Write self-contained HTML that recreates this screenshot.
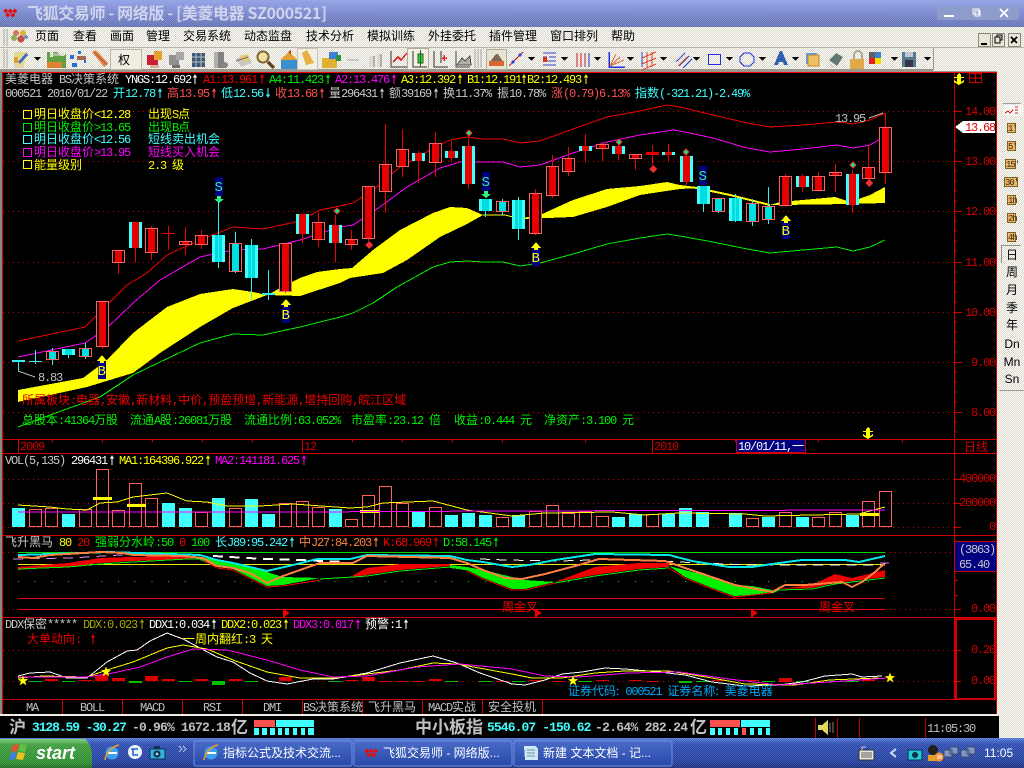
<!DOCTYPE html>
<html><head><meta charset="utf-8"><title>飞狐交易师</title>
<style>
html,body{margin:0;padding:0;background:#000;overflow:hidden;width:1024px;height:768px}
svg{display:block}
text{font-family:"Liberation Mono","WenQuanYi Zen Hei","Noto Sans CJK SC",monospace;font-size:12px;letter-spacing:-1.2px;white-space:pre}
.c{font-family:"WenQuanYi Zen Hei","Noto Sans CJK SC",sans-serif;font-size:12px;letter-spacing:0}
.s{font-family:"Liberation Sans","WenQuanYi Zen Hei","Noto Sans CJK SC",sans-serif;font-size:12px;letter-spacing:0}
.b{font-family:"Liberation Mono",monospace;font-weight:bold;font-size:13px;letter-spacing:-1px}
.h{font-family:"Noto Sans CJK SC",sans-serif;font-weight:bold;font-size:17px;letter-spacing:0}
</style></head><body>
<svg width="1024" height="768" viewBox="0 0 1024 768" shape-rendering="crispEdges">
<defs>
<pattern id="chk" width="2" height="2" patternUnits="userSpaceOnUse"><rect width="2" height="2" fill="#d9d6c8"/><rect width="1" height="1" fill="#fff"/><rect x="1" y="1" width="1" height="1" fill="#fff"/></pattern>
<pattern id="dit" width="2" height="2" patternUnits="userSpaceOnUse"><rect width="1" height="1" fill="#fff" fill-opacity=".13"/><rect x="1" y="1" width="1" height="1" fill="#fff" fill-opacity=".13"/></pattern>
<linearGradient id="tg" x1="0" y1="0" x2="0" y2="1"><stop offset="0" stop-color="#8f9fe6"/><stop offset=".5" stop-color="#7685cc"/><stop offset="1" stop-color="#6272b4"/></linearGradient>
<linearGradient id="bg" x1="0" y1="0" x2="0" y2="1"><stop offset="0" stop-color="#5478d4"/><stop offset=".2" stop-color="#2c4cb0"/><stop offset=".8" stop-color="#223e9c"/><stop offset="1" stop-color="#182c78"/></linearGradient>
<linearGradient id="sg" x1="0" y1="0" x2="0" y2="1"><stop offset="0" stop-color="#7cc87c"/><stop offset=".2" stop-color="#3c9c3c"/><stop offset=".8" stop-color="#2c8c2c"/><stop offset="1" stop-color="#1c6c1c"/></linearGradient>
<linearGradient id="tb" x1="0" y1="0" x2="0" y2="1"><stop offset="0" stop-color="#4a6cc8"/><stop offset="1" stop-color="#2848a8"/></linearGradient>
<path id="u" d="M3 0L5 3.500H3.500V10H2.500V3.500H1Z"/>
<path id="d" d="M2.500 0H3.500V6.500H5L3 10L1 6.500H2.500Z"/>
<path id="ya" d="M0 6L5 0L10 6H7V8H3V6Z"/>
<path id="anc" d="M6 0L8 2V4H11V5H8V9L11 7V9L6 12L1 9V7L4 9V5H1V4H4V2Z"/>
<path id="st" d="M0-10L2.600-3.300H9.500L3.900 1L6 8L0 3.800L-6 8L-3.900 1L-9.500-3.300H-2.600Z"/>
<path id="lg" d="M3 3l2.500-2.500L8 3 5.500 5.500zM7.500 3l2.500-2.500L12.500 3 10 5.500zM12 3l2.500-2.500L17 3 14.500 5.500zM5.200 7l2.500-2.500L10.200 7 7.700 9.500zM10 7l2.500-2.500L15 7 12.500 9.500z"/>
</defs>

<!-- base -->
<rect width="1024" height="768" fill="#000"/>
<rect x="0" y="27" width="1024" height="44" fill="url(#chk)"/>
<rect x="997" y="71" width="27" height="667" fill="url(#chk)"/>

<!-- title bar -->
<rect width="1024" height="27" fill="url(#tg)"/><rect width="1024" height="27" fill="url(#dit)"/>
<use href="#lg" x="0" y="8" fill="#e01010"/>
<text x="27" y="19" class="h" fill="#d0d4ec" style="font-size:16px" textLength="300">飞狐交易师 - 网络版 - [美菱电器 SZ000521]</text>
<rect x="937" y="6" width="28" height="14" rx="2" fill="#8e9ccc"/><rect x="965" y="6" width="26" height="14" fill="#8e9ccc"/><rect x="991" y="6" width="28" height="14" rx="2" fill="#8e9ccc"/>
<path d="M944 15h10v2h-10z" fill="#fff"/><path d="M973 9h6v5h-6zM975 11v5h5v-5z" fill="none" stroke="#fff"/><path d="M1000 9l8 8M1008 9l-8 8" stroke="#fff" stroke-width="2" fill="none"/>

<!-- menu bar -->
<path d="M4 29v17M7 29v17" stroke="#a8a598"/>
<circle cx="16" cy="33" r="3" fill="#d8785a"/><circle cx="23" cy="33" r="3" fill="#e0b040"/><circle cx="14" cy="38" r="3" fill="#8ab060"/><circle cx="21" cy="39" r="3.500" fill="#c05048"/><circle cx="26" cy="37" r="2" fill="#7090c0"/>
<g fill="#000">
<text x="35" y="40"><tspan class="c">页面</tspan></text><text x="73" y="40"><tspan class="c">查看</tspan></text><text x="110" y="40"><tspan class="c">画面</tspan></text><text x="146" y="40"><tspan class="c">管理</tspan></text><text x="183" y="40"><tspan class="c">交易系统</tspan></text><text x="244" y="40"><tspan class="c">动态监盘</tspan></text><text x="306" y="40"><tspan class="c">技术分析</tspan></text><text x="367" y="40"><tspan class="c">模拟训练</tspan></text><text x="428" y="40"><tspan class="c">外挂委托</tspan></text><text x="489" y="40"><tspan class="c">插件管理</tspan></text><text x="550" y="40"><tspan class="c">窗口排列</tspan></text><text x="611" y="40"><tspan class="c">帮助</tspan></text>
</g>
<g fill="#e8e5d8" stroke="#8a887c"><rect x="978.500" y="33.500" width="12" height="13"/><rect x="992.500" y="33.500" width="12" height="13"/><rect x="1008.500" y="33.500" width="12" height="13"/></g>
<path d="M981 43h6v2h-6z" fill="#000"/><path d="M995 37h5v6h-5zM997 37v-2h5v5h-2" fill="none" stroke="#000"/><path d="M1011 37l6 6M1017 37l-6 6" stroke="#000" stroke-width="1.500" fill="none"/>

<!-- toolbar -->
<rect x="0" y="47" width="1024" height="1" fill="#b8b5a8"/>
<rect x="0" y="69" width="933" height="2" fill="#9a988c"/><rect x="933" y="48" width="1" height="22" fill="#9a988c"/>
<path d="M4 49v19M7 49v19" stroke="#a8a598"/>
<path d="M14 52h10v16h-10z" fill="#d8d4b8"/><path d="M14 52l3 15h7l3-15z" fill="#e6d890"/><path d="M18 62l8-9 2 2-8 9z" fill="#4068c0"/><path d="M14 57h4v6h-4z" fill="#e0a030"/>
<path d="M34 57h7l-3.500 4z M128 57h7l-3.500 4z" fill="#000"/>
<path d="M47 68V52h3v5h3v-5h4l4 4h3l2-3v15z" fill="#60a040"/><path d="M47 62h15v6h-15z" fill="#e08030"/><path d="M50 53h14v3h-14z" fill="#d8d8d8" fill-opacity=".6"/>
<path d="M70 55h4v4h-4zM78 51h3v3h-3zM72 63h5v4h-5zM84 60h2v3h-2z" fill="#2070d8"/><path d="M77 56h9v4h-9z" fill="#a06850"/>
<path d="M92 52l4-2 12 13-4 4z" fill="#e08848"/><path d="M94 52l13 13" stroke="#b85830"/>
<rect x="110.500" y="49.500" width="31" height="20" fill="#f0eee2" stroke="#b8b5a8"/><text x="118" y="64"><tspan class="c" fill="#000">权</tspan></text>
<path d="M147 55h11v10h-11z" fill="#c82030"/><path d="M154 51h8v9h-8z" fill="#e8a030"/><path d="M150 65h9v3h-9z" fill="#d8b0a0"/>
<path d="M169 55h10v10h-10z" fill="#909090"/><path d="M176 52h8v8h-8z" fill="#a8a8a8"/><path d="M172 65h8v3h-8z" fill="#707070"/>
<path d="M192 53h13v14h-13z" fill="#405878"/><path d="M192 57h13M192 62h13M196 53v14M201 53v14" stroke="#b8c0c0"/>
<path d="M214 52h10v16h-10z" fill="#b0b0a8"/><path d="M218 52h6v16h-6z" fill="#808080"/><circle cx="225" cy="65" r="3" fill="#888"/>
<path d="M236 59l12-5 4 9-11 4z" fill="#c8c8c8"/><path d="M240 56l8-2 2 6-8 2z" fill="#e8c870"/><path d="M236 61l12-4" stroke="#707070"/>
<circle cx="263" cy="57" r="5.500" fill="#f0e0a8" stroke="#806830" stroke-width="2"/><path d="M268 62l6 6" stroke="#604020" stroke-width="3"/>
<path d="M280 60l9-8 9 8z" fill="#e0a030"/><path d="M281 60h16v9h-16z" fill="#3890d0"/><path d="M288 52l3-2v5z" fill="#c04020"/>
<rect x="297.500" y="48.500" width="20" height="21" fill="#f2f0e4" stroke="#c8c5b8"/><path d="M302 53l5-3 7 13-8 2z" fill="#e8b040"/>
<path d="M322 58h15v10h-15z" fill="#e0b030"/><path d="M329 52h9v7h-9z" fill="#4080d0"/><path d="M336 55h5v6h-5z" fill="#309040"/>
<path d="M345 56h15v3h-15zM345 63h15v3h-15z" fill="#e8e8e8"/><path d="M347 60h12" stroke="#a0a0a0"/>
<path d="M369 56h6v11h-6zM377 54h5v13h-5z" fill="#dcdcd4"/><path d="M373 56h2v11h-2zM380 54h2v13h-2z" fill="#b0b0a8"/>
<path d="M391 51v16h17" fill="none" stroke="#303030"/><path d="M393 62l5-5 3 3 6-7" fill="none" stroke="#e02020" stroke-width="1.500"/>
<rect x="407.500" y="48.500" width="21" height="21" fill="#f2f0e4" stroke="#b0ad9e"/><path d="M413 51v16h14" fill="none" stroke="#303030"/><rect x="418" y="54" width="5" height="9" fill="#40d040" stroke="#206020"/><path d="M420.500 50v17" stroke="#206020"/>
<path d="M434 51v16h14M441 51v12" fill="none" stroke="#303030"/><path d="M442 58h5M444 55v6" stroke="#e02020" stroke-width="1.500"/>
<path d="M456 51v16h14" fill="none" stroke="#404040"/><path d="M457 65l5-7 3 3 5-5 1 9z" fill="#b0b0a8" stroke="#505050"/>
<path d="M475 49v19M478 49v19M481 49v19" stroke="#a8a598"/>
<rect x="486.500" y="49.500" width="20" height="20" fill="#e8e4d0" stroke="#b0ad9e"/><path d="M489 63l7-9h2l6 9z" fill="#806858"/><path d="M489 61h15v5h-15z" fill="#d86830"/>
<path d="M509 66l14-14" stroke="#e02020"/><circle cx="513" cy="62" r="1.500" fill="#2040e0"/><circle cx="520" cy="55" r="1.500" fill="#2040e0"/>
<path d="M528 57h7l-3.500 4zM561 57h7l-3.500 4zM594 57h7l-3.500 4zM627 57h7l-3.500 4zM660 57h7l-3.500 4zM693 57h7l-3.500 4zM726 57h7l-3.500 4zM759 57h7l-3.500 4zM792 57h7l-3.500 4zM891 57h7l-3.500 4zM924 57h7l-3.500 4z" fill="#000"/>
<path d="M543 53h13M543 57h4M549 57h7M543 61h13M543 65h13" stroke="#3040d0"/><path d="M543 57h4v5h-4z" fill="#e03020"/>
<path d="M577 53v14M581 53v14M585 53v14" stroke="#c02020"/><path d="M589 53v14" stroke="#2030d0"/>
<path d="M609 52v15h16" fill="none" stroke="#2030e0" stroke-width="1.500"/><path d="M610 66l6-12M610 66l10-9M610 66l14-6" stroke="#e06030"/>
<path d="M642 58l14-6M642 64l14-6M642 70l14-6M647 52v15M652 52v15" stroke="#e04020" fill="none"/><path d="M642 52v15" stroke="#3040d0"/>
<path d="M676 62l9-9M679 66l10-10M683 68l9-9" stroke="#3040d0" fill="none"/><path d="M678 66l9-9" stroke="#e06030"/>
<rect x="708.500" y="54.500" width="12" height="10" fill="none" stroke="#2030e0"/>
<path d="M744 53h6l4 4v5l-4 4h-6l-4-4v-5z" fill="none" stroke="#2030e0"/>
<path d="M774 65l6-14h2l6 14h-4l-1-3h-4l-1 3z" fill="#3060b0"/>
<rect x="806" y="53" width="11" height="11" fill="#60a0e0"/><rect x="808" y="55" width="11" height="11" fill="#f0c060" stroke="#c08030"/>
<path d="M829 60l7-7 7 4-6 9z" fill="#607870"/><path d="M829 63l6 4-3 1z" fill="#c8c8c8"/>
<path d="M853 55a5 5 0 0 1 10 0v4h-2v-4a3 3 0 0 0-6 0v4h-2z" fill="#b0a890"/><rect x="850" y="59" width="14" height="10" fill="#e0a848"/>
<rect x="869" y="52" width="6" height="6" fill="#606060"/><rect x="875" y="52" width="6" height="6" fill="#4080d0"/><rect x="869" y="58" width="6" height="6" fill="#e02020"/><rect x="875" y="58" width="6" height="6" fill="#f0e000"/>
<rect x="902" y="52" width="14" height="15" fill="#587890"/><rect x="905" y="52" width="8" height="5" fill="#c0c8d0"/><rect x="905" y="60" width="8" height="7" fill="#303848"/>

<!-- frame -->
<rect x="0" y="71" width="2" height="643" fill="#888"/>
<g fill="#d00000">
<rect x="2" y="72" width="995" height="1" fill="#f00000"/><rect x="0" y="71" width="997" height="1" fill="#9a988c"/>
<rect x="2" y="72" width="1" height="642"/><rect x="996" y="72" width="1" height="642"/>
<rect x="954" y="72" width="1" height="627"/>
<rect x="2" y="439" width="994" height="1"/><rect x="2" y="453" width="994" height="1"/><rect x="2" y="535" width="994" height="1"/><rect x="2" y="617" width="994" height="1"/><rect x="2" y="699" width="994" height="1"/>
<rect x="955" y="618" width="41" height="2"/><rect x="955" y="618" width="2" height="82"/><rect x="994" y="618" width="2" height="82"/><rect x="955" y="698" width="41" height="2"/>
</g>

<!-- grid -->
<g stroke="#d00000" stroke-dasharray="1 4" fill="none">
<path d="M3 111.500H954M3 161.500H954M3 211.500H954M3 262.500H954M3 312.500H954M3 362.500H954M3 412.500H954M3 479.500H954M3 503.500H954M3 527.500H954M3 552.500H18M885 552.500H954M3 609.500H18M885 609.500H954M3 650.500H954M3 681.500H954"/>
</g>
<path d="M955 121h5M955 131h3M955 141h3M955 151h3M955 171h3M955 181h3M955 191h3M955 201h3M955 221h3M955 231h3M955 241h3M955 251h3M955 272h3M955 282h3M955 292h3M955 302h3M955 322h3M955 332h3M955 342h3M955 352h3M955 372h3M955 382h3M955 392h3M955 402h3M955 422h3M955 432h3" stroke="#d00000" stroke-dasharray="1 1"/>
<path d="M955 111.500h7M955 161.500h7M955 211.500h7M955 262.500h7M955 312.500h7M955 362.500h7M955 412.500h7M955 479.500h6M955 503.500h6M955 527.500h6M955 552.500h4M955 565.500h3M955 580.500h3M955 595.500h3M955 609.500h6M955 650.500h6M955 681.500h6" stroke="#d00000"/>

<!-- envelope lines and band -->
<polygon fill="#ffff00" points="18,390 83,378 107,360 133,333 167,307 200,294 233,289 253,292 267,295 300,278 317,272 340,269 352,268 373,250 400,230 433,213 450,207 467,208 483,215 467,224 440,237 407,260 383,273 350,278 340,283 300,296 267,295 233,308 200,327 160,353 133,373 87,387 18,402"/>
<polyline fill="none" stroke="#ffff00" points="483,215 505,215 513,217 522,219"/>
<polygon fill="#ffff00" points="522,218 540,215 573,200 607,189 640,186 667,182 680,185 697,188 680,189 673,190 640,195 607,207 573,217 522,219"/>
<polyline fill="none" stroke="#ffff00" stroke-width="2" points="680,186 697,188 730,195 770,205"/>
<polygon fill="#ffff00" points="770,205 780,202 813,199 835,197 850,202 870,195 885,187 885,203 850,204 780,205"/>
<polyline fill="none" stroke="#f00000" points="18,341 85,327 100,312 127,285 147,273 167,255 200,240 233,227 263,229 300,221 320,210 340,206 353,203 373,190 400,167 430,150 450,140 467,137 483,139 503,139 520,143 540,141 573,129 607,117 640,111 667,105 680,107 713,115 747,123 770,127 803,125 837,122 853,124 870,120 885,113"/>
<polyline fill="none" stroke="#ff00ff" points="18,357 85,343 107,328 133,303 160,280 200,257 233,250 263,249 300,240 340,227 353,225 373,212 407,187 440,168 460,162 503,162 520,167 540,165 573,153 607,142 640,135 673,130 680,131 713,138 747,148 770,152 803,149 837,145 853,148 870,145 882,138"/>
<polyline fill="none" stroke="#00f000" points="18,427 50,415 100,397 133,375 160,362 200,343 233,334 263,335 300,327 340,317 353,313 373,303 397,287 433,267 450,262 467,261 483,262 503,262 520,266 540,263 573,254 607,244 640,238 667,234 680,236 713,242 747,249 770,253 803,250 837,247 853,251 870,247 885,240"/>

<!-- candles: cyan fills -->
<path fill="#40ffff" d="M62 349h13v6h-13zM129 222h13v26h-13zM212 235h13v27h-13zM245 245h13v33h-13zM296 214h13v20h-13zM329 225h13v18h-13zM412 153h13v8h-13zM445 151h13v7h-13zM462 146h13v38h-13zM479 199h13v12h-13zM512 200h13v29h-13zM579 146h13v5h-13zM612 146h13v8h-13zM662 152h13v3h-13zM680 156h13v26h-13zM697 186h13v18h-13zM729 198h13v23h-13zM796 176h13v11h-13zM846 174h13v31h-13z"/>
<path fill="#00dcdc" d="M215 235h7v27h-7zM248 245h7v33h-7zM482 199h7v12h-7zM515 200h7v29h-7zM700 186h7v18h-7zM732 198h7v23h-7zM65 349h7v6h-7z"/>
<!-- wicks -->
<path fill="none" stroke="#f00000" d="M102.500 346v3M118.500 262v12M135.500 248v14M151.500 226v34M168.500 226v24M185.500 227v28M201.500 230v19M285.500 291v2M302.500 234v9M318.500 213v34M335.500 215v47M351.500 230v20M368.500 238v3M385.500 124v89M402.500 129v48M418.500 151v32M435.500 132v45M451.500 141v21M468.500 138v51M535.500 189v46M552.500 155v43M568.500 147v29M585.500 134v28M602.500 142v19M618.500 144v16M635.500 154v16M652.500 145v20M668.500 144v18M686.500 150v35M785.500 174v33M802.500 174v18M818.500 172v19M835.500 164v28M852.500 170v43M868.500 146v34M885.500 113v71"/>
<path fill="none" stroke="#30f0f0" d="M18.500 361v10M35.500 350v14M52.500 348v17M68.500 355v3M85.500 343v16M218.500 200v68M235.500 232v41M251.500 239v61M268.500 270v30M485.500 211v6M502.500 199v16M518.500 197v43M703.500 204v8M718.500 211v2M735.500 194v28M752.500 199v27M768.500 187v37"/>
<path fill="#30f0f0" d="M12 360h13v2h-13zM29 361h13v1h-13zM262 293h13v2h-13z"/>
<path fill="#f00000" d="M162 233h13v1h-13zM652 152h1v1h-1z"/>
<!-- red bodies -->
<path fill="#000" d="M46 351h12v8h-12zM79 348h12v8h-12zM96 301h12v45h-12zM112 250h12v12h-12zM145 228h12v24h-12zM179 241h12v3h-12zM195 235h12v9h-12zM229 243h12v28h-12zM279 243h12v48h-12zM312 222h12v17h-12zM345 239h12v5h-12zM362 186h12v52h-12zM379 164h12v27h-12zM396 149h12v17h-12zM429 143h12v19h-12zM496 201h12v10h-12zM529 193h12v40h-12zM546 166h12v29h-12zM562 158h12v13h-12zM596 144h12v4h-12zM629 154h12v4h-12zM712 198h12v13h-12zM746 203h12v18h-12zM762 206h12v13h-12zM779 176h12v29h-12zM812 176h12v14h-12zM829 172h12v3h-12zM862 167h12v11h-12zM879 127h12v45h-12z"/>
<path fill="#e60000" d="M99 301h7v45h-7zM115 250h7v12h-7zM148 228h7v24h-7zM182 241h7v3h-7zM198 235h7v9h-7zM282 243h7v48h-7zM315 222h7v17h-7zM348 239h7v5h-7zM365 186h7v52h-7zM382 164h7v27h-7zM399 149h7v17h-7zM432 143h7v19h-7zM532 193h7v40h-7zM549 166h7v29h-7zM565 158h7v13h-7zM599 144h7v4h-7zM632 154h7v4h-7zM782 176h7v29h-7zM815 176h7v14h-7zM832 172h7v3h-7zM865 167h7v11h-7zM882 127h7v45h-7zM132 222h7v26h-7zM299 214h7v20h-7zM332 225h7v18h-7zM415 153h7v8h-7zM448 151h7v7h-7zM465 146h7v38h-7zM582 146h7v5h-7zM615 146h7v8h-7zM665 152h7v3h-7zM683 156h7v26h-7zM799 176h7v11h-7zM849 174h7v31h-7zM646 152h13v3h-13z"/>
<path fill="#00e0e0" d="M49 351h7v8h-7zM82 348h7v8h-7zM232 243h7v28h-7zM499 201h7v10h-7zM715 198h7v13h-7zM749 203h7v18h-7zM765 206h7v13h-7z"/>
<path fill="none" stroke="#ff6060" d="M46.500 351.500h12v8h-12zM79.500 348.500h12v8h-12zM96.500 301.500h12v45h-12zM112.500 250.500h12v12h-12zM145.500 228.500h12v24h-12zM179.500 241.500h12v3h-12zM195.500 235.500h12v9h-12zM229.500 243.500h12v28h-12zM279.500 243.500h12v48h-12zM312.500 222.500h12v17h-12zM345.500 239.500h12v5h-12zM362.500 186.500h12v52h-12zM379.500 164.500h12v27h-12zM396.500 149.500h12v17h-12zM429.500 143.500h12v19h-12zM496.500 201.500h12v10h-12zM529.500 193.500h12v40h-12zM546.500 166.500h12v29h-12zM562.500 158.500h12v13h-12zM596.500 144.500h12v4h-12zM629.500 154.500h12v4h-12zM712.500 198.500h12v13h-12zM746.500 203.500h12v18h-12zM762.500 206.500h12v13h-12zM779.500 176.500h12v29h-12zM812.500 176.500h12v14h-12zM829.500 172.500h12v3h-12zM862.500 167.500h12v11h-12zM879.500 127.500h12v45h-12z"/>
<!-- diamonds -->
<path fill="#f03030" d="M369 241l4 4-4 4-4-4zM653 165l4 4-4 4-4-4zM869 179l4 4-4 4-4-4z"/>
<path fill="#00f080" stroke="#e03030" d="M469 130l3 3-3 3-3-3zM619 139l3 3-3 3-3-3zM686 149l3 3-3 3-3-3zM853 162l3 3-3 3-3-3zM337 208l3 3-3 3-3-3z"/>
<!-- S/B markers -->
<g fill="#000080"><rect x="215" y="177" width="8" height="19"/><rect x="482" y="172" width="8" height="19"/><rect x="699" y="166" width="8" height="19"/><rect x="98" y="361" width="8" height="18"/><rect x="282" y="305" width="8" height="18"/><rect x="532" y="248" width="8" height="18"/><rect x="782" y="221" width="8" height="18"/></g>
<path fill="#30f080" d="M217 196h4v3h3l-5 4-5-4h3zM484 191h4v3h3l-5 4-5-4h3z"/>
<g fill="#ffff00"><use href="#ya" x="97" y="355"/><use href="#ya" x="281" y="299"/><use href="#ya" x="531" y="242"/><use href="#ya" x="781" y="215"/></g>
<text x="214.500" y="191" fill="#30f080" style="font-size:14px;letter-spacing:0">S</text><text x="481.500" y="186" fill="#30f080" style="font-size:14px;letter-spacing:0">S</text><text x="698.500" y="180" fill="#30f080" style="font-size:14px;letter-spacing:0">S</text><text x="97.500" y="375" fill="#ffff00" style="font-size:14px;letter-spacing:0">B</text><text x="281.500" y="319" fill="#ffff00" style="font-size:14px;letter-spacing:0">B</text><text x="531.500" y="262" fill="#ffff00" style="font-size:14px;letter-spacing:0">B</text><text x="781.500" y="235" fill="#ffff00" style="font-size:14px;letter-spacing:0">B</text>
<path d="M18 371L35 377" stroke="#c0c0c0" fill="none"/><text x="38" y="381" fill="#c0c0c0">8.83</text>
<path d="M869 118L883 113" stroke="#c0c0c0" fill="none"/><text x="835" y="122" fill="#c0c0c0">13.95</text>

<!-- header rows -->
<text x="5" y="83" fill="#c8c8c8"><tspan class="c">美菱电器</tspan></text>
<text x="59" y="83" fill="#c8c8c8">BS<tspan class="c">决策系统</tspan></text>
<text x="125" y="83" fill="#fff">YNGS:12.692</text><use href="#u" x="192" y="74" fill="#fff"/>
<text x="203" y="83" fill="#f00000">A1:13.961</text><use href="#u" x="259" y="74" fill="#f00000"/>
<text x="269" y="83" fill="#00f000">A4:11.423</text><use href="#u" x="325" y="74" fill="#00f000"/>
<text x="335" y="83" fill="#ff00ff">A2:13.476</text><use href="#u" x="391" y="74" fill="#ff00ff"/>
<text x="401" y="83" fill="#ffff00">A3:12.392</text><use href="#u" x="457" y="74" fill="#ffff00"/>
<text x="467" y="83" fill="#ffff00">B1:12.191</text><use href="#u" x="521" y="74" fill="#ffff00"/>
<text x="527" y="83" fill="#ffff00">B2:12.493</text><use href="#u" x="583" y="74" fill="#ffff00"/>

<text x="5" y="97" fill="#c8c8c8">000521 2010/01/22</text>
<text x="113" y="97" fill="#40ffff"><tspan class="c">开</tspan>12.78</text><use href="#u" x="157" y="88" fill="#40ffff"/>
<text x="167" y="97" fill="#ff5050"><tspan class="c">高</tspan>13.95</text><use href="#u" x="211" y="88" fill="#ff5050"/>
<text x="221" y="97" fill="#40ffff"><tspan class="c">低</tspan>12.56</text><use href="#d" x="265" y="88" fill="#40ffff"/>
<text x="275" y="97" fill="#ff5050"><tspan class="c">收</tspan>13.68</text><use href="#u" x="319" y="88" fill="#ff5050"/>
<text x="329" y="97" fill="#c8c8c8"><tspan class="c">量</tspan>296431</text><use href="#u" x="379" y="88" fill="#c8c8c8"/>
<text x="389" y="97" fill="#c8c8c8"><tspan class="c">额</tspan>39169</text><use href="#u" x="433" y="88" fill="#c8c8c8"/>
<text x="443" y="97" fill="#c8c8c8"><tspan class="c">换</tspan>11.37%</text>
<text x="497" y="97" fill="#c8c8c8"><tspan class="c">振</tspan>10.78%</text>
<text x="551" y="97" fill="#ff5050"><tspan class="c">涨</tspan>(0.79)6.13%</text>
<text x="635" y="97" fill="#40ffff"><tspan class="c">指数</tspan>(-321.21)-2.49%</text>

<!-- legend -->
<g fill="none" stroke-width="1">
<rect x="23.500" y="110.500" width="8" height="8" stroke="#ffff00"/><rect x="23.500" y="123.500" width="8" height="8" stroke="#00f000"/><rect x="23.500" y="135.500" width="8" height="8" stroke="#40ffff"/><rect x="23.500" y="148.500" width="8" height="8" stroke="#ff00ff"/><rect x="23.500" y="160.500" width="8" height="8" stroke="#ffff00"/>
</g>
<text x="34" y="118" fill="#ffff00"><tspan class="c">明日收盘价</tspan>&lt;12.28</text><text x="148" y="118" fill="#ffff00"><tspan class="c">出现</tspan>S<tspan class="c">点</tspan></text>
<text x="34" y="131" fill="#00f000"><tspan class="c">明日收盘价</tspan>&gt;13.65</text><text x="148" y="131" fill="#00f000"><tspan class="c">出现</tspan>B<tspan class="c">点</tspan></text>
<text x="34" y="143" fill="#40ffff"><tspan class="c">明日收盘价</tspan>&lt;12.56</text><text x="148" y="143" fill="#40ffff"><tspan class="c">短线卖出机会</tspan></text>
<text x="34" y="156" fill="#ff00ff"><tspan class="c">明日收盘价</tspan>&gt;13.95</text><text x="148" y="156" fill="#ff00ff"><tspan class="c">短线买入机会</tspan></text>
<text x="34" y="169" fill="#ffff00"><tspan class="c">能量级别</tspan></text><text x="148" y="169" fill="#ffff00">2.3 <tspan class="c">级</tspan></text>

<text x="22" y="404" fill="#f00000"><tspan class="c">所属板块</tspan>:<tspan class="c">电器</tspan>,<tspan class="c">安徽</tspan>,<tspan class="c">新材料</tspan>,<tspan class="c">中价</tspan>,<tspan class="c">预盈预增</tspan>,<tspan class="c">新能源</tspan>,<tspan class="c">增持回购</tspan>,<tspan class="c">皖江区域</tspan></text>
<text x="22" y="424" fill="#00f000"><tspan class="c">总股本</tspan>:41364<tspan class="c">万股</tspan></text>
<text x="130" y="424" fill="#00f000"><tspan class="c">流通</tspan>A<tspan class="c">股</tspan>:26081<tspan class="c">万股</tspan></text>
<text x="244" y="424" fill="#00f000"><tspan class="c">流通比例</tspan>:63.052%</text>
<text x="351" y="424" fill="#00f000"><tspan class="c">市盈率</tspan>:23.12 <tspan class="c">倍</tspan></text>
<text x="454" y="424" fill="#00f000"><tspan class="c">收益</tspan>:0.444 <tspan class="c">元</tspan></text>
<text x="544" y="424" fill="#00f000"><tspan class="c">净资产</tspan>:3.100 <tspan class="c">元</tspan></text>

<!-- price axis -->
<g fill="#d00000">
<text x="965" y="115">14.00</text><text x="965" y="165">13.00</text><text x="965" y="215">12.00</text><text x="965" y="266">11.00</text><text x="965" y="316">10.00</text><text x="971" y="366">9.00</text><text x="971" y="416">8.00</text>
<text x="959" y="482">400000</text><text x="959" y="506">200000</text><text x="989" y="530">0</text>
<text x="971" y="612">0.00</text><text x="971" y="653">0.20</text><text x="971" y="684">0.00</text>
</g>
<polygon fill="#fff" points="955,127 963,121 995,121 995,133 963,133"/><text x="965" y="131" fill="#e00000">13.68</text>
<use href="#anc" x="953" y="73" fill="#ffff00"/><path d="M969.500 73.500h12v9h-12zM975.500 73v9M969 78h12" fill="none" stroke="#d00000"/>
<use href="#anc" x="862" y="427" fill="#ffff00"/>

<!-- time axis -->
<path d="M18.500 440v13M302.500 440v13M652.500 440v13M52.500 440v2M102.500 440v2M152.500 440v2M202.500 440v2M252.500 440v2M352.500 440v2M402.500 440v2M452.500 440v2M502.500 440v2M585.500 440v2M735.500 440v2M818.500 440v2M902.500 440v2M954.500 440v2" stroke="#d00000"/>
<text x="20" y="450" fill="#d00000">2009</text><text x="304" y="450" fill="#d00000">12</text><text x="654" y="450" fill="#d00000">2010</text>
<rect x="736.500" y="439.500" width="69" height="13" fill="#000080" stroke="#d00000"/><text x="738" y="450" fill="#fff">10/01/11,<tspan class="c">一</tspan></text>
<text x="964" y="451" fill="#d00000"><tspan class="c">日线</tspan></text>

<!-- VOL -->
<text x="5" y="464" fill="#c8c8c8">VOL(5,135)</text><text x="71" y="464" fill="#fff">296431</text><use href="#u" x="109" y="455" fill="#fff"/>
<text x="119" y="464" fill="#ffff00">MA1:164396.922</text><use href="#u" x="205" y="455" fill="#ffff00"/>
<text x="215" y="464" fill="#ff00ff">MA2:141181.625</text><use href="#u" x="301" y="455" fill="#ff00ff"/>
<path fill="#40ffff" d="M12 508h13v19h-13zM62 514h13v13h-13zM162 503h13v24h-13zM179 508h13v19h-13zM212 498h13v29h-13zM245 499h13v28h-13zM262 514h13v13h-13zM329 509h13v18h-13zM412 511h13v16h-13zM445 515h13v12h-13zM462 513h13v14h-13zM479 515h13v12h-13zM512 515h13v12h-13zM612 517h13v10h-13zM629 514h13v13h-13zM662 514h13v13h-13zM679 508h13v19h-13zM696 512h13v15h-13zM729 513h13v14h-13zM762 517h13v10h-13zM796 517h13v10h-13zM846 515h13v12h-13z"/>
<path fill="none" stroke="#ff6060" d="M29.500 509.500h12v17h-12zM45.500 508.500h12v18h-12zM79.500 509.500h12v17h-12zM96.500 469.500h12v57h-12zM112.500 510.500h12v16h-12zM129.500 483.500h12v43h-12zM145.500 498.500h12v28h-12zM195.500 512.500h12v14h-12zM229.500 508.500h12v18h-12zM279.500 503.500h12v23h-12zM296.500 501.500h12v25h-12zM312.500 507.500h12v19h-12zM345.500 519.500h12v7h-12zM362.500 495.500h12v31h-12zM379.500 486.500h12v40h-12zM396.500 503.500h12v23h-12zM429.500 507.500h12v19h-12zM496.500 517.500h12v9h-12zM529.500 511.500h12v15h-12zM546.500 505.500h12v21h-12zM562.500 513.500h12v13h-12zM579.500 511.500h12v15h-12zM596.500 516.500h12v10h-12zM646.500 514.500h12v12h-12zM746.500 518.500h12v8h-12zM779.500 512.500h12v14h-12zM812.500 517.500h12v9h-12zM829.500 512.500h12v14h-12zM862.500 501.500h12v25h-12zM879.500 491.500h12v35h-12z"/>
<path fill="#ffff00" d="M93 497h19v3h-19zM127 504h19v3h-19zM360 510h19v3h-19zM860 513h19v3h-19z"/>
<polyline fill="none" stroke="#ffff00" points="18,505 50,507 67,509 87,510 100,503 117,502 133,497 167,493 187,501 207,502 227,506 260,506 293,504 350,508 367,507 383,503 433,501 467,510 512,516 545,513 612,512 645,515 679,513 745,514 765,516 859,514 877,509 885,507"/>
<polyline fill="none" stroke="#ff00ff" points="18,512 300,512 500,511 885,510"/>

<!-- Feisheng panel -->
<text x="5" y="546" fill="#c8c8c8"><tspan class="c">飞升黑马</tspan></text><text x="59" y="546" fill="#ffff00">80</text><text x="77" y="546" fill="#f00000">20</text>
<text x="95" y="546" fill="#00f000"><tspan class="c">强弱分水岭</tspan>:50</text><text x="179" y="546" fill="#f00000">0</text><text x="191" y="546" fill="#00f000">100</text>
<text x="215" y="546" fill="#40ffff"><tspan class="c">长</tspan>J89:95.242</text><use href="#u" x="289" y="537" fill="#40ffff"/>
<text x="299" y="546" fill="#ff8040"><tspan class="c">中</tspan>J27:84.203</text><use href="#u" x="373" y="537" fill="#ff8040"/>
<text x="383" y="546" fill="#f00000">K:68.969</text><use href="#u" x="433" y="537" fill="#f00000"/>
<text x="443" y="546" fill="#00f000">D:58.145</text><use href="#u" x="493" y="537" fill="#00f000"/>
<path d="M18 552.500H885" stroke="#00d800"/><path d="M18 564.500H885" stroke="#e8e800"/>
<path d="M18 581.500H885" stroke="#00e000" stroke-dasharray="1 15.670"/>
<path d="M18 598.500H885" stroke="#e00000"/><path d="M18 609.500H885" stroke="#f00000"/>
<polyline fill="none" stroke="#e090e0" stroke-dasharray="10 6.670" points="13,559 70,558 120,555 190,555"/>
<polyline fill="none" stroke="#fff" stroke-width="2" stroke-dasharray="10 6.670" points="213,556 230,557 265,559 300,560 345,562"/>
<polyline fill="none" stroke="#fff" stroke-dasharray="10 6.670" points="480,559 505,560 560,561 620,559 700,563 750,565 885,565"/>
<polygon fill="#f00000" points="18,567 43,565 68,563 100,558 133,557 187,556 203,557 187,559 133,561 100,563 68,567 43,568 18,570"/>
<polygon fill="#00f000" points="200,557 217,560 233,562 267,572 283,577 320,578 283,585 267,586 233,569 217,567 200,560"/>
<polygon fill="#f00000" points="353,575 367,568 400,564 450,564 450,566 400,570 367,575 353,577"/>
<polygon fill="#00f000" points="450,565 467,567 483,570 512,577 525,580 555,582 525,589 512,589 483,578 467,570 450,568"/>
<polygon fill="#f00000" points="555,582 595,567 639,563 669,563 669,567 639,569 595,575"/>
<polygon fill="#00f000" points="669,566 685,570 712,577 734,585 752,586 772,590 772,592 752,595 734,596 712,588 685,577"/>
<polygon fill="#f00000" points="779,589 812,585 835,574 852,578 885,570 885,577 852,581 835,583 812,588"/>
<polyline fill="none" stroke="#00f000" points="18,569 68,567 100,564 133,562 187,559 203,559"/>
<polyline fill="none" stroke="#f00000" points="203,560 217,568 233,570 267,587 283,586 320,580"/>
<polyline fill="none" stroke="#00f000" points="320,579 353,577 367,576 400,571 450,567 467,570"/>
<polyline fill="none" stroke="#f00000" points="467,571 483,579 512,590 525,590 555,583"/>
<polyline fill="none" stroke="#00f000" points="555,583 595,576 639,570 669,568"/>
<polyline fill="none" stroke="#f00000" points="669,568 685,578 712,589 734,597 772,593"/>
<polyline fill="none" stroke="#00f000" points="772,593 779,590 812,589 835,584 852,582 885,578"/>
<polyline fill="none" stroke="#00e8e8" stroke-width="2" points="18,555 83,553 107,552 200,555 217,560 233,563 250,567 267,571 293,565 317,559 350,559 367,555 450,556 467,560 483,562 512,567 529,565 555,560 595,554 669,555 692,561 729,567 752,567 779,563 802,560 845,560 859,562 885,556"/>
<polyline fill="none" stroke="#ff8040" stroke-width="2" points="18,557 33,558 50,555 100,552 123,553 133,555 183,556 203,558 217,566 233,568 250,573 267,583 283,576 320,563 353,563 367,556 450,558 467,563 483,570 505,578 522,579 545,574 579,565 599,559 665,561 685,568 700,573 735,585 772,592 785,585 805,585 842,582 852,587 862,582 875,572 885,563"/>
<path d="M880 563h9" stroke="#e070e0"/>
<rect x="955" y="542" width="41" height="29" fill="#000080"/><path d="M955 541.500h41M955 571.500h41" stroke="#d00000"/>
<text x="959" y="553" fill="#c8c8c8">(3863)</text><text x="959" y="568" fill="#c8c8c8">65.40</text>
<path fill="#f00000" d="M283 609h2v8h-2zM285 610l5 3-5 3zM535 609h2v8h-2zM537 610l5 3-5 3zM751 609h2v8h-2zM753 610l5 3-5 3z"/>
<text x="502" y="611" fill="#f00000"><tspan class="c">周金叉</tspan></text><text x="819" y="611" fill="#f00000"><tspan class="c">周金叉</tspan></text>

<!-- DDX panel -->
<text x="5" y="628" fill="#c8c8c8">DDX<tspan class="c">保密</tspan>*****</text>
<text x="83" y="628" fill="#a8a800">DDX:0.023</text><use href="#u" x="139" y="619" fill="#a8a800"/>
<text x="149" y="628" fill="#fff">DDX1:0.034</text><use href="#u" x="211" y="619" fill="#fff"/>
<text x="221" y="628" fill="#ffff00">DDX2:0.023</text><use href="#u" x="283" y="619" fill="#ffff00"/>
<text x="293" y="628" fill="#ff00ff">DDX3:0.017</text><use href="#u" x="355" y="619" fill="#ff00ff"/>
<text x="365" y="628" fill="#fff"><tspan class="c">预警</tspan>:1</text><use href="#u" x="403" y="619" fill="#fff"/>
<text x="27" y="643" fill="#f00000"><tspan class="c">大单动向</tspan>:</text><use href="#u" x="90" y="634" fill="#f00000"/>
<text x="183" y="643" fill="#ffff00"><tspan class="c">一周内翻红</tspan>:3 <tspan class="c">天</tspan></text>
<path fill="#d80000" d="M45 679h13v2h-13zM79 680h13v1h-13zM95 675h13v6h-13zM112 678h13v3h-13zM145 676h13v5h-13zM162 679h13v2h-13zM195 679h13v2h-13zM229 679h13v2h-13zM279 677h13v4h-13zM345 680h13v1h-13zM362 677h13v4h-13zM379 681h13v1h-13zM396 681h13v1h-13zM412 681h13v1h-13zM429 679h13v2h-13zM496 681h12v1h-12zM529 680h13v1h-13zM552 681h13v1h-13zM596 680h13v1h-13zM629 680h13v1h-13zM646 681h12v1h-12zM712 680h13v1h-13zM746 680h13v1h-13zM779 678h13v4h-13zM862 680h13v1h-13z"/>
<path fill="#00c000" d="M29 681h13v1h-13zM62 681h13v1h-13zM129 681h13v2h-13zM179 681h13v1h-13zM212 681h13v4h-13zM245 681h13v1h-13zM329 681h13v1h-13zM445 681h13v1h-13zM479 681h13v1h-13zM512 681h13v1h-13zM579 681h13v1h-13zM679 681h13v2h-13zM696 681h13v1h-13zM762 681h13v1h-13zM796 681h13v1h-13zM829 681h13v1h-13zM846 681h13v1h-13z"/>
<polyline fill="none" stroke="#fff" points="18,676 30,673 50,672 67,678 87,678 107,662 127,651 137,650 150,641 167,633 183,639 200,648 217,657 233,662 250,673 267,681 287,684 313,679 333,679 367,673 400,663 433,656 457,663 480,673 512,684 525,685 545,680 562,674 582,672 605,668 625,669 659,672 685,675 712,682 745,686 779,685 802,682 825,676 852,674 862,677 882,676"/>
<polyline fill="none" stroke="#ffff00" points="18,678 43,676 87,677 107,670 133,662 167,648 183,645 207,649 233,660 267,672 300,678 333,678 367,674 400,670 433,663 457,664 512,674 532,678 562,678 595,673 625,671 669,671 712,678 745,684 795,685 829,680 879,678"/>
<polyline fill="none" stroke="#ff00ff" points="18,677 87,677 113,673 140,667 167,657 193,649 227,650 267,660 300,670 333,677 367,676 417,667 460,664 512,669 545,676 579,677 629,673 679,672 729,679 779,685 829,682 889,678"/>
<g fill="#ffff00" stroke="none" shape-rendering="auto"><use href="#st" transform="translate(23 681) scale(.55)"/><use href="#st" transform="translate(106 672) scale(.55)"/><use href="#st" transform="translate(573 681) scale(.55)"/><use href="#st" transform="translate(890 678) scale(.55)"/></g>
<text x="568" y="695" fill="#00a8f8"><tspan class="c">证券代码:</tspan> 000521 <tspan class="c">证券名称:</tspan> <tspan class="c">美菱电器</tspan></text>

<!-- tabs -->
<path d="M62.500 700v14M122.500 700v14M182.500 700v14M242.500 700v14M302.500 700v14M362.500 700v14M422.500 700v14M482.500 700v14M542.500 700v14" stroke="#d00000"/>
<g fill="#c0c0c0"><text x="26" y="711">MA</text><text x="80" y="711">BOLL</text><text x="140" y="711">MACD</text><text x="203" y="711">RSI</text><text x="263" y="711">DMI</text><text x="303" y="711">BS<tspan class="c">决策系统</tspan></text><text x="368" y="711"><tspan class="c">飞升黑马</tspan></text><text x="428" y="711">MACD<tspan class="c">实战</tspan></text><text x="488" y="711"><tspan class="c">安全投机</tspan></text></g>
<rect x="0" y="714" width="997" height="2" fill="#f0eee6"/>

<!-- status bar -->
<rect x="0" y="716" width="999" height="22" fill="#000"/>
<text x="9" y="733" class="h" fill="#c0c0c0">沪</text>
<text x="32" y="731" class="b" fill="#40ffff" style="letter-spacing:-1.1px">3128.59 -30.27</text>
<text x="132" y="731" class="b" fill="#c0c0c0" style="letter-spacing:-.8px">-0.96% 1672.18</text>
<text x="231" y="733" class="h" fill="#c0c0c0">亿</text>
<rect x="254" y="720" width="21" height="7" fill="#ff5050"/><rect x="276" y="720" width="38" height="7" fill="#40ffff"/>
<path fill="#40ffff" d="M254 728h5v7h-5zM262 728h5v7h-5zM270 728h5v7h-5zM278 728h4v7h-4zM285 728h4v7h-4zM293 728h4v7h-4zM301 728h4v7h-4zM308 728h6v7h-6z"/>
<text x="415" y="733" class="h" fill="#c0c0c0">中小板指</text>
<text x="487" y="731" class="b" fill="#40ffff" style="letter-spacing:-.9px">5546.07 -150.62</text>
<text x="595" y="731" class="b" fill="#c0c0c0" style="letter-spacing:-.7px">-2.64% 282.24</text>
<text x="690" y="733" class="h" fill="#c0c0c0">亿</text>
<rect x="710" y="720" width="30" height="7" fill="#ff5050"/><rect x="741" y="720" width="29" height="7" fill="#40ffff"/>
<path fill="#40ffff" d="M710 728h5v7h-5zM718 728h4v7h-4zM726 728h4v7h-4zM734 728h4v7h-4zM758 728h4v7h-4zM766 728h4v7h-4z"/>
<path fill="#ff5050" d="M742 728h4v7h-4z"/><path fill="#40ffff" d="M750 728h4v7h-4z"/>
<path d="M815.500 718v20M837.500 718v20M859.500 718v20M925.500 718v20" stroke="#c00000"/>
<path d="M818 725h4l6-5v15l-6-5h-4z" fill="#e0d860"/><path d="M830 723v9M833 722v11" stroke="#808080"/>
<text x="927" y="732" fill="#c0c0c0">11:05:30</text>

<!-- taskbar -->
<rect x="0" y="738" width="1024" height="30" fill="url(#bg)"/><rect x="0" y="738" width="1024" height="30" fill="url(#dit)"/>
<path d="M0 739H85Q92 745 92 755V768H0Z" fill="url(#sg)"/><path d="M0 739H85Q92 745 92 755V768H0Z" fill="url(#dit)"/>
<g shape-rendering="auto"><path d="M13 745l6-1-2 7-6 1z" fill="#e85030"/><path d="M20 744l7 1-2 7-7-1z" fill="#60c040"/><path d="M11 753l6-1-2 7-6 1z" fill="#4080e0"/><path d="M18 752l7 1-2 7-7-1z" fill="#f0c020"/></g>
<text x="36" y="759" style="font-family:'Liberation Sans',sans-serif;font-size:18px;font-style:italic;font-weight:bold;letter-spacing:0" fill="#fff">start</text>
<g shape-rendering="auto">
<circle cx="112" cy="753" r="6.500" fill="#3ca0f0"/><path d="M107 753h10" stroke="#fff" stroke-width="2"/><path d="M105 760c1-8 8-14 14-15" fill="none" stroke="#f0a020" stroke-width="1.500"/>
<circle cx="135" cy="752" r="7" fill="#f0f4ff"/><path d="M131 749h7M133 749v6h5" fill="none" stroke="#2060c0" stroke-width="1.500"/>
<rect x="150" y="749" width="15" height="10" fill="#30b0e0" stroke="#103050"/><rect x="154" y="746" width="6" height="3" fill="#103050"/><circle cx="157" cy="754" r="3.500" fill="#102840"/><circle cx="157" cy="754" r="1.500" fill="#80e0ff"/>
</g>
<path d="M179 746l3 3-3 3M183 746l3 3-3 3" fill="none" stroke="#a8c0f0"/>
<g>
<rect x="194" y="741" width="158" height="25" rx="2" fill="url(#tb)" stroke="#6c90e0"/><rect x="354" y="741" width="158" height="25" rx="2" fill="url(#tb)" stroke="#6c90e0"/><rect x="514" y="741" width="158" height="25" rx="2" fill="url(#tb)" stroke="#6c90e0"/>
</g>
<g shape-rendering="auto"><circle cx="211" cy="753" r="6.500" fill="#3ca0f0"/><path d="M206 753h10" stroke="#fff" stroke-width="2"/><path d="M204 760c1-8 8-14 14-15" fill="none" stroke="#f0a020" stroke-width="1.500"/></g>
<use href="#lg" x="361" y="748" fill="#e01010"/>
<path d="M524 746h12l2 3v11h-13z" fill="#d0e8f0"/><path d="M527 750h8M527 753h8M527 756h8" stroke="#6090b0"/>
<text x="223" y="757" fill="#fff" class="s">指标公式及技术交流...</text>
<text x="383" y="757" fill="#fff" class="s">飞狐交易师 - 网络版...</text>
<text x="543" y="757" fill="#fff" class="s">新建 文本文档 - 记...</text>
<rect x="859" y="750" width="15" height="10" fill="#e8e8e0" stroke="#303030"/><path d="M861 753h11M861 755h11M861 757h11" stroke="#606060"/><path d="M862 750v-3h4" stroke="#d0d0d0" fill="none"/>
<path d="M896 749l-5 4 5 4" fill="none" stroke="#c8d8f8" stroke-width="2"/>
<rect x="908" y="750" width="14" height="10" fill="#20c8d8" stroke="#103048"/><circle cx="915" cy="755" r="3" fill="#103048"/>
<circle cx="933" cy="750" r="5" fill="#202020"/><path d="M928 755h10v6h-10z" fill="#e8a020"/><circle cx="939" cy="757" r="4.500" fill="#f09030"/><path d="M937 756h5M937 758h5" stroke="#fff"/>
<path d="M944 750h8v7h-8zM950 747h8v7h-8z" fill="#8098c8" stroke="#404868"/><path d="M961 750h8v7h-8zM967 747h8v7h-8z" fill="#8098c8" stroke="#404868"/>
<text x="984" y="757" fill="#fff" class="s">11:05</text>

<!-- right period panel -->
<g fill="#fff"><rect x="1003" y="105" width="20" height="11" fill-opacity=".6"/></g>
<path d="M1005 113l3-2 2 2 3-3" stroke="#e02020" fill="none"/><path d="M1015 107h3M1015 110h3M1015 113h3" stroke="#e02020"/><path d="M1003 103.500h18" stroke="#a0a098"/>
<g fill="#e8bc70" stroke="#806020">
<rect x="1007.500" y="123.500" width="8" height="9"/><rect x="1007.500" y="141.500" width="8" height="9"/><rect x="1005.500" y="159.500" width="10" height="9"/><rect x="1004.500" y="177.500" width="13" height="9"/><rect x="1007.500" y="195.500" width="8" height="9"/><rect x="1007.500" y="213.500" width="8" height="9"/><rect x="1007.500" y="232.500" width="8" height="9"/>
</g>
<g fill="#402000">
<text x="1008" y="131" style="font-size:9px;letter-spacing:-1px">1'</text><text x="1008" y="149" style="font-size:9px;letter-spacing:-1px">5'</text><text x="1006" y="167" style="font-size:9px;letter-spacing:-1px">15'</text><text x="1005" y="185" style="font-size:9px;letter-spacing:-1px">30'</text><text x="1008" y="203" style="font-size:9px;letter-spacing:-1px">1h</text><text x="1008" y="221" style="font-size:9px;letter-spacing:-1px">2h</text><text x="1008" y="240" style="font-size:9px;letter-spacing:-1px">4h</text>
</g>
<path d="M1001.500 263V245.500H1021" fill="none" stroke="#909088"/>
<g fill="#000">
<text x="1006" y="259"><tspan class="c">日</tspan></text><text x="1006" y="276"><tspan class="c">周</tspan></text><text x="1006" y="294"><tspan class="c">月</tspan></text><text x="1006" y="312"><tspan class="c">季</tspan></text><text x="1006" y="329"><tspan class="c">年</tspan></text>
<text x="1012" y="348" text-anchor="middle" style="font-family:'Liberation Sans',sans-serif;font-size:12px;letter-spacing:0">Dn</text><text x="1012" y="366" text-anchor="middle" style="font-family:'Liberation Sans',sans-serif;font-size:12px;letter-spacing:0">Mn</text><text x="1012" y="383" text-anchor="middle" style="font-family:'Liberation Sans',sans-serif;font-size:12px;letter-spacing:0">Sn</text>
</g>
<rect x="999" y="390" width="25" height="1" fill="#a0a098"/>
</svg>
</body></html>
